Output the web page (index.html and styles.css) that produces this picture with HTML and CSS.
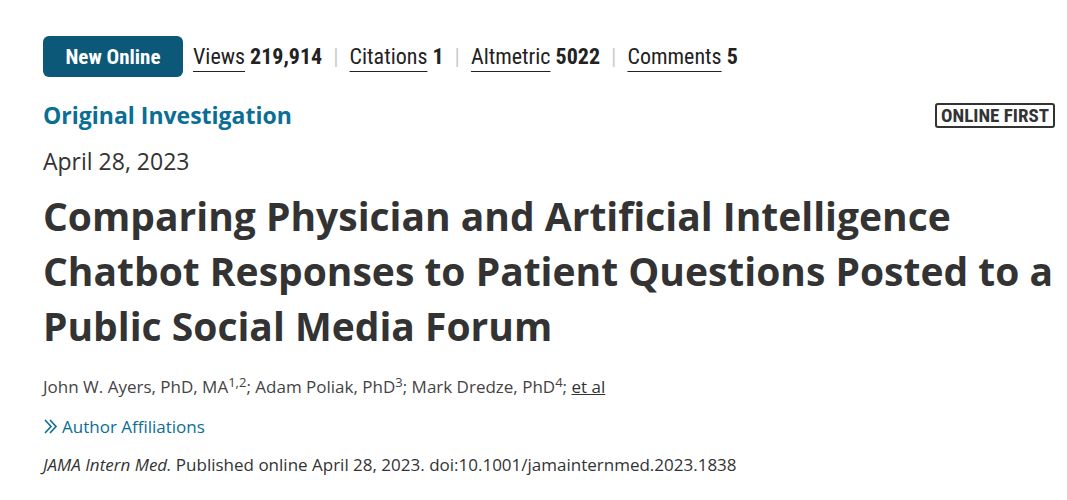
FILE: index.html
```html
<!DOCTYPE html>
<html>
<head>
<meta charset="utf-8">
<link rel="stylesheet" href="styles.css">
</head>
<body>
<div class="page">
  <div class="meta-bar">
    <span class="badge-new">New Online</span>
    <span class="stat"><a class="stat-link">Views</a> <b>219,914</b></span>
    <span class="sep">|</span>
    <span class="stat"><a class="stat-link">Citations</a> <b>1</b></span>
    <span class="sep">|</span>
    <span class="stat"><a class="stat-link">Altmetric</a> <b>5022</b></span>
    <span class="sep">|</span>
    <span class="stat"><a class="stat-link">Comments</a> <b>5</b></span>
  </div>
  <div class="type-row">
    <div class="article-type">Original Investigation</div>
    <div class="online-first">ONLINE FIRST</div>
  </div>
  <div class="date">April 28, 2023</div>
  <h1 class="title">Comparing Physician and Artificial Intelligence Chatbot Responses to Patient Questions Posted to a Public Social Media Forum</h1>
  <div class="authors">John W. Ayers, PhD, MA<sup>1,2</sup>; Adam Poliak, PhD<sup>3</sup>; Mark Dredze, PhD<sup>4</sup>; <a class="etal">et al</a></div>
  <div class="affil"><svg class="chev" width="15" height="17" viewBox="0 0 15 17"><path d="M2 2 L8 8.5 L2 15 M7 2 L13 8.5 L7 15" fill="none" stroke="currentColor" stroke-width="1.6"/></svg>Author Affiliations</div>
  <div class="citation"><i>JAMA Intern Med.</i> Published online April 28, 2023. doi:10.1001/jamainternmed.2023.1838</div>
</div>
</body>
</html>
```
FILE: styles.css
```css
html, body { margin: 0; padding: 0; background: #fff; }
body { font-family: "Open Sans", "Noto Sans", sans-serif; color: #333; }
.page { padding: 36px 12px 0 43px; }
.meta-bar {
  display: flex; align-items: center; height: 41px;
  font-family: "Liberation Sans Narrow", "Roboto", sans-serif;
  font-stretch: condensed;
  font-size: 22px; color: #222;
}
.badge-new {
  background: #0b5878; color: #fff; font-weight: bold;
  height: 41px; width: 140px; border-radius: 6px;
  display: flex; align-items: center; justify-content: center;
  margin-right: 10px; font-size: 21px;
}
.stat b { font-weight: bold; }
.stat-link { text-decoration: underline; text-underline-offset: 7px; text-decoration-thickness: 1px; color: #222; }
.sep { color: #ccc; margin: 0 11px; }
.type-row { display: flex; justify-content: space-between; align-items: center; margin-top: 22px; }
.article-type { color: #0a6e95; font-weight: bold; font-size: 23px; }
.online-first {
  font-family: "Liberation Sans Narrow", "Roboto", sans-serif; font-stretch: condensed;
  font-weight: bold; font-size: 19px; color: #333;
  border: 2px solid #333; border-radius: 3px; padding: 0 4px; line-height: 21px;
}
.date { font-size: 23px; margin-top: 14px; color: #333; }
.title { font-size: 39px; line-height: 55px; font-weight: bold; margin: 11px 0 0; color: #333; }
.authors { font-size: 17px; color: #444; margin-top: 22px; }
.authors sup { font-size: 13px; vertical-align: 0.45em; line-height: 0; }
.etal { text-decoration: underline; color: #333; }
.affil { color: #0a6e95; font-size: 17px; margin-top: 17px; display: flex; align-items: center; gap: 4px; }
.chev { display: block; }
.citation { font-size: 17px; color: #333; margin-top: 15px; }
```
